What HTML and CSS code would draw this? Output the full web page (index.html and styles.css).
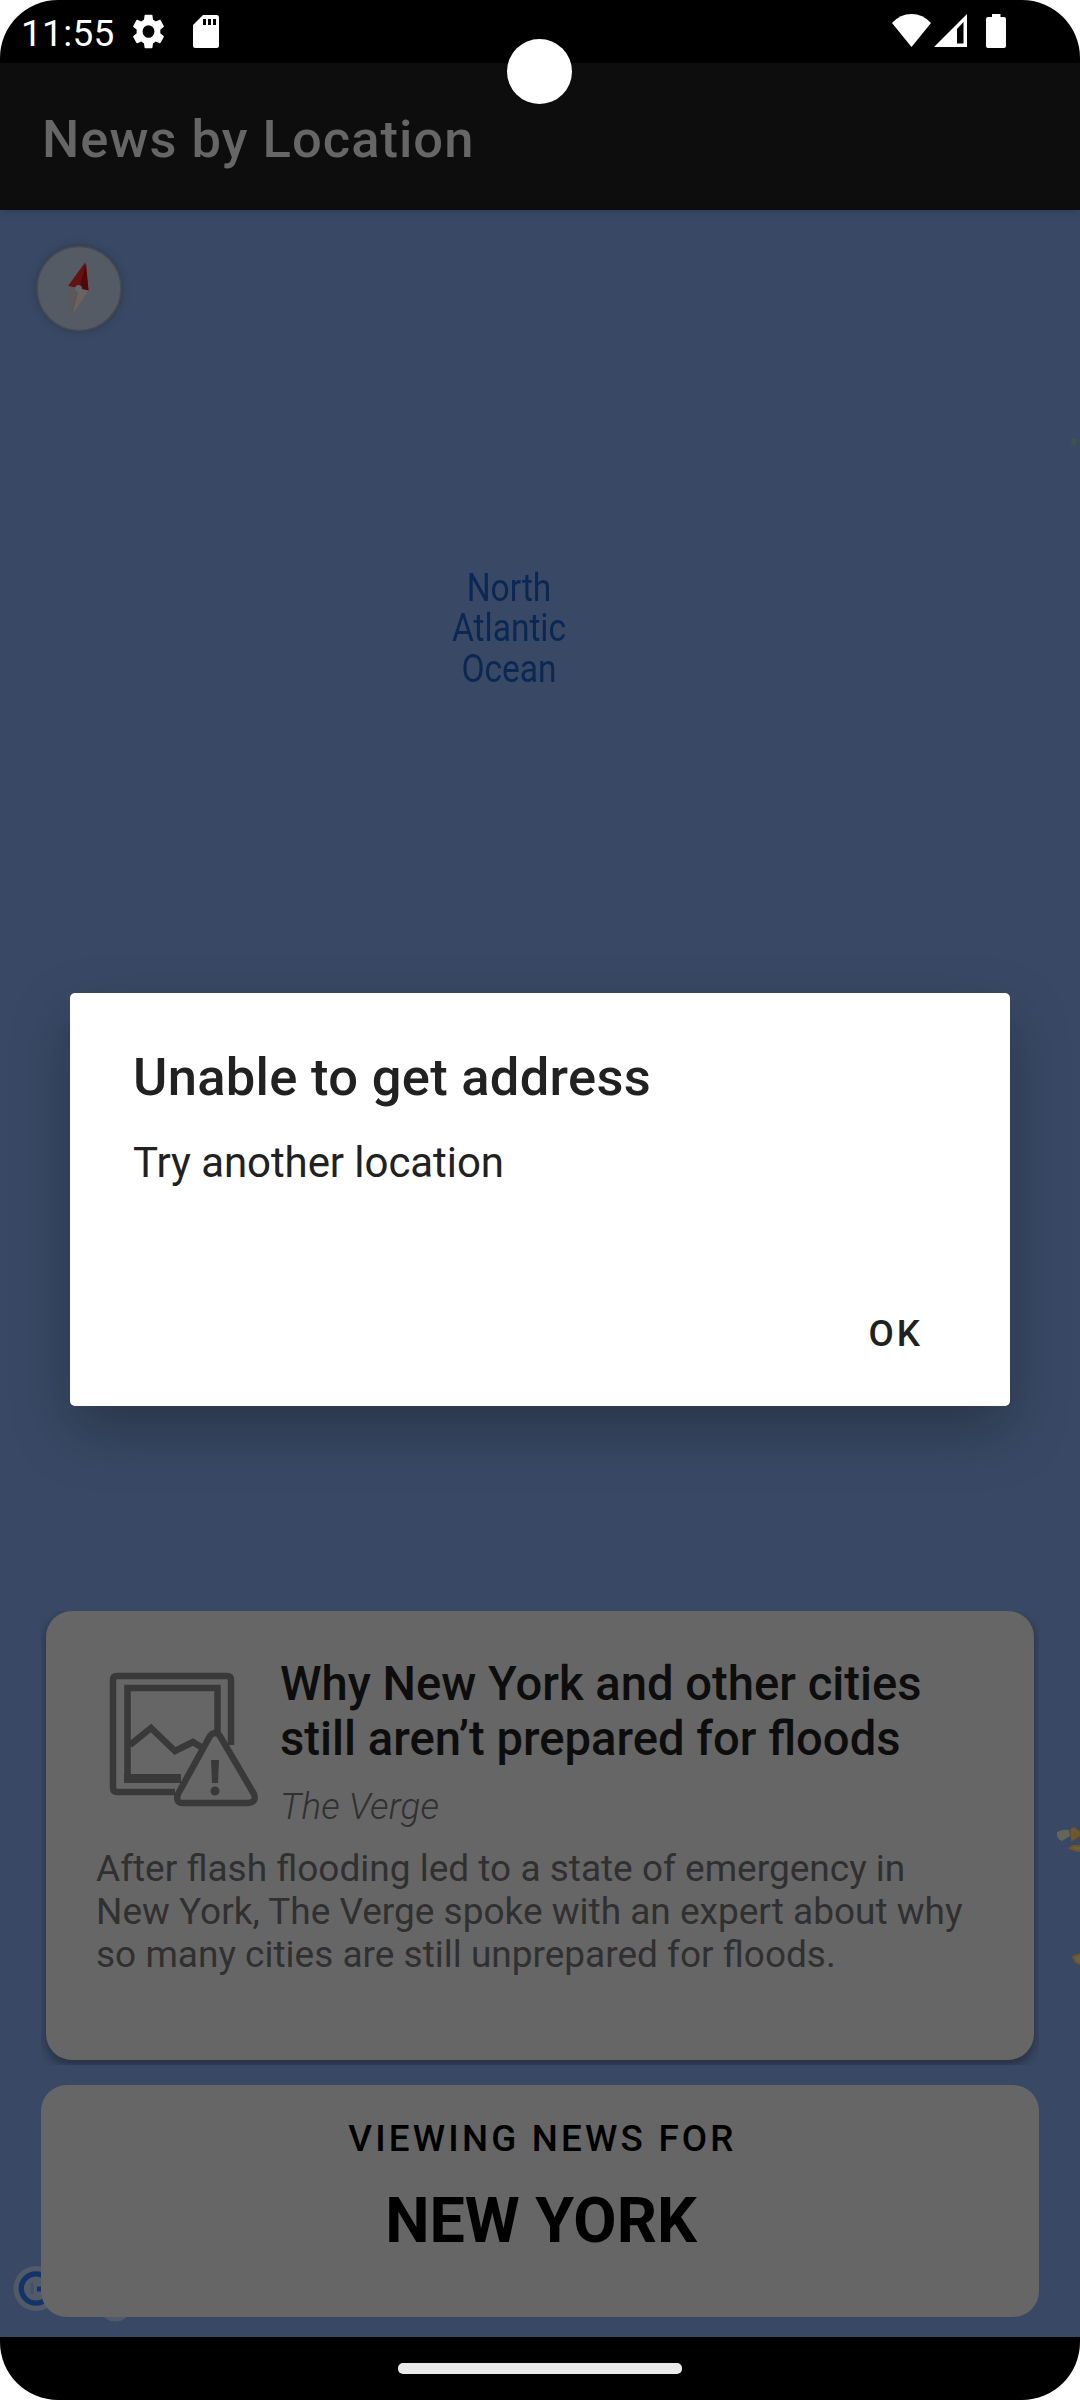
FILE: index.html
```html
<!DOCTYPE html>
<html lang="en">
<head>
<meta charset="utf-8">
<title>News by Location</title>
<link rel="stylesheet" href="styles.css">
</head>
<body>
<div class="screen">
  <header class="status">
    <span class="time">11:55</span>
    <svg class="gear" viewBox="2 2 20 20" preserveAspectRatio="none"><path d="M19.14 12.94c.04-.3.06-.61.06-.94 0-.32-.02-.64-.07-.94l2.03-1.58c.18-.14.23-.41.12-.61l-1.92-3.32c-.12-.22-.37-.29-.59-.22l-2.39.96c-.5-.38-1.03-.7-1.62-.94L14.4 2.81c-.04-.24-.24-.41-.48-.41h-3.84c-.24 0-.43.17-.47.41L9.25 5.35c-.59.24-1.13.57-1.62.94l-2.39-.96c-.22-.08-.47 0-.59.22L2.74 8.87c-.12.21-.08.47.12.61l2.03 1.58c-.05.3-.09.63-.09.94s.02.64.07.94l-2.03 1.58c-.18.14-.23.41-.12.61l1.92 3.32c.12.22.37.29.59.22l2.39-.96c.5.38 1.03.7 1.62.94l.36 2.54c.05.24.24.41.48.41h3.84c.24 0 .44-.17.47-.41l.36-2.54c.59-.24 1.13-.56 1.62-.94l2.39.96c.22.08.47 0 .59-.22l1.92-3.32c.12-.22.07-.47-.12-.61zM12 15.6A3.6 3.6 0 1 1 12 8.4a3.6 3.6 0 0 1 0 7.2z"/></svg>
    <svg class="sd" viewBox="0 0 26 33"><path d="M10 0H23.500A2.500 2.500 0 0 1 26 2.500V30.500A2.500 2.500 0 0 1 23.500 33H2.500A2.500 2.500 0 0 1 0 30.500V10Z"/><path class="cut" d="M10 4h3v6h-3zM15 4h3v6h-3zM20 4h3v6h-3z"/></svg>
    <span class="grow"></span>
    <svg class="wifi" viewBox="0 0 39 33"><path d="M0 9Q8 0 19.500 0T39 9L19.500 33Z"/></svg>
    <svg class="signal" viewBox="0 0 33 33"><path fill-rule="evenodd" d="M33 0V33H0ZM23 15V29.500H29.500V8Z"/></svg>
    <svg class="battery" viewBox="0 0 20 34"><path d="M6 0H14.500V3H18A2 2 0 0 1 20 5V32A2 2 0 0 1 18 34H2A2 2 0 0 1 0 32V5A2 2 0 0 1 2 3H6Z"/></svg>
  </header>
  <div class="appbar"><h1>News by Location</h1></div>
  <main class="map">
    <svg class="compass" viewBox="0 0 96 96">
      <circle class="rim" cx="48" cy="48.500" r="42"/>
      <path fill="#661111" d="M54 22.500 37 46 57.500 50.500Z"/><path fill="#530808" d="M55 23 57.500 50.500 48 48.500Z"/>
      <path fill="#5a5957" d="M37 46 48 48.500 42 73.500 40.500 73Z"/><path fill="#6a645d" d="M48 48.500 57.500 50.500 42 73.500Z"/>
      <circle cx="47.500" cy="48.500" r="3.500" fill="#60656e"/>
    </svg>
    <p class="ocean">North<br>Atlantic<br>Ocean</p>
    <svg class="islands" viewBox="0 0 26 1600">
      <path class="sand" d="M3 1413q6-3 12-2l1 6-8 5q-6-2-5-9z"/>
      <path class="coast" d="M17 1411l3-2 6 5v2l-8 5zM20 1413v4l4-1zM26 1427h-7l-3 2 7 3h3M26 1535l-7 3 3 5 4 2"/>
      <path class="grass" d="M18 19l5 1-2 7-4-1z"/>
    </svg>
    <svg class="maplogo" viewBox="0 0 130 60">
      <circle cx="24" cy="26.500" r="22.500" fill="#515a67"/><circle cx="103.500" cy="42" r="17.500" fill="#515a67"/>
      <circle cx="24" cy="26.500" r="14.700" fill="none" stroke="#15336a" stroke-width="5.300"/>
      <path d="M20 21v11" stroke="#405070" stroke-width="3"/><path d="M25 24.500h8v5h-8z" fill="#15336a"/>
    </svg>
    <div class="feed">
      <article class="news">
        <div class="top">
          <svg class="thumb" viewBox="0 0 152 138">
            <path d="M134 79V14q0-4-4-4H20q-4 0-4 4V122q0 4 4 4H78"/>
            <path d="M120.500 68V22H30.500V110M33 79 54 62 78 85 96 76 104 81"/>
            <path class="base" d="M27 112.500H84"/>
            <path class="sign" d="M113 70Q118 64 123 70L157 128Q160 137 150 137H86Q78 137 81 128Z"/>
            <path class="solid" d="M114 94h8l-1 23h-6zM122.500 125a4.500 4.500 0 1 0-9 0a4.500 4.500 0 1 0 9 0z"/>
          </svg>
          <div class="head"><h2>Why New York and other cities<br>still aren’t prepared for floods</h2><p class="source">The Verge</p></div>
        </div>
        <p class="summary">After flash flooding led to a state of emergency in<br>New York, The Verge spoke with an expert about why<br>so many cities are still unprepared for floods.</p>
      </article>
    </div>
    <section class="place"><p>VIEWING NEWS FOR</p><strong>NEW YORK</strong></section>
  </main>
  <footer class="nav"><span></span></footer>
  <div class="dialog" role="dialog"><h2>Unable to get address</h2><p>Try another location</p><button>OK</button></div>
  <div class="camera"></div>
</div>
</body>
</html>
```
FILE: styles.css
```css
* { box-sizing: border-box; margin: 0; padding: 0; }
body { background: #fff; font-family: Roboto, sans-serif; }
svg { display: block; flex: none; }
.screen { position: relative; width: 1080px; height: 2400px; display: flex; flex-direction: column; background: #000; border-radius: 58px; overflow: hidden; }
.status { height: 63px; padding: 0 74px 0 21px; display: flex; align-items: flex-start; }
.status svg { fill: #fff; }
.time { width: 111px; color: #fff; font-size: 37px; line-height: 43px; padding-top: 12px; letter-spacing: .3px; }
.gear { width: 33px; height: 35px; margin-top: 14px; }
.sd { width: 26px; height: 33px; margin: 15px 0 0 28px; }
.status .cut { fill: #000; }
.grow { flex: 1; }
.wifi { width: 39px; height: 33px; margin: 14px 3px 0 0; }
.signal { width: 33px; height: 33px; margin: 14px 19px 0 0; }
.battery { width: 20px; height: 34px; margin-top: 14px; }
.appbar { position: relative; z-index: 1; height: 147px; padding: 0 42px; display: flex; align-items: center; background: #0d0d0d; box-shadow: 0 2px 10px rgba(0,0,0,.15); }
h1 { color: #666; font-size: 52.5px; font-weight: 500; line-height: 62px; padding-top: 4px; letter-spacing: 1.02px; }
.map { position: relative; height: 2127px; padding: 1401px 41px 20px; display: flex; flex-direction: column; gap: 20px; background: #394965; }
.compass { position: absolute; left: 31px; top: 30px; width: 96px; height: 96px; filter: drop-shadow(0 0 4px rgba(0,0,0,.22)); }
.rim { fill: #555b65; stroke: #484a4e; stroke-width: 1.5; }
.ocean { position: absolute; left: 408.5px; top: 357.5px; width: 200px; color: #0b2753; font-size: 39px; line-height: 40.7px; text-align: center; transform: scaleX(.86); }
.islands { position: absolute; right: 0; top: 209px; width: 26px; height: 1600px; }
.sand { fill: #65645b; }
.grass { fill: #405349; }
.coast { fill: #65604f; stroke: #745521; stroke-width: 2; }
.maplogo { position: absolute; left: 12px; top: 2052px; width: 130px; height: 60px; }
.feed { position: relative; height: 454px; padding: 0 5px 5px; overflow: hidden; }
.news { height: 449px; border-radius: 26px; background: #666; padding: 43px 51px 0 50px; box-shadow: 0 5px 12px rgba(0,0,0,.38); }
.top { display: flex; }
.thumb { width: 152px; height: 138px; margin: 12px 0 0 1px; overflow: visible; fill: none; stroke: #393939; stroke-width: 6.5; }
.thumb .base { stroke-width: 9; }
.thumb .sign { fill: #666; }
.thumb .solid { fill: #393939; stroke: none; }
.head { margin-left: 31px; padding-top: 3px; flex: none; }
.news h2 { font-size: 47.2px; font-weight: 500; line-height: 55px; color: #0d0d0d; }
.source { margin-top: 18px; font-size: 36.75px; line-height: 43px; font-weight: 300; font-style: italic; letter-spacing: .15px; color: #303030; }
.summary { margin-top: 19px; font-size: 37px; line-height: 43px; color: #303030; white-space: nowrap; }
.place { position: relative; height: 232px; border-radius: 26px; background: #666; text-align: center; color: #000; }
.place p { padding: 32px 0 0 5px; font-size: 36.75px; line-height: 43px; font-weight: 500; letter-spacing: 3.2px; }
.place strong { display: block; margin-top: 24px; padding-left: 2px; font-size: 62.8px; line-height: 74px; }
.nav { height: 63px; display: flex; justify-content: center; padding-top: 26px; }
.nav span { width: 284px; height: 11px; border-radius: 5px; background: #ebebeb; }
.dialog { position: absolute; z-index: 2; left: 70px; top: 993px; width: 940px; height: 413px; padding: 53px 87px 0 63px; display: flex; flex-direction: column; background: #fff; color: #212121; border-radius: 5px; box-shadow: 0 24px 60px rgba(0,0,0,.28); }
.dialog h2 { font-size: 52.5px; font-weight: 500; line-height: 62px; letter-spacing: .3px; }
.dialog p { margin-top: 30px; font-size: 42px; line-height: 49px; letter-spacing: -.07px; }
.dialog button { align-self: flex-end; margin-top: 125px; border: 0; background: none; font: 500 36.75px/43px Roboto, sans-serif; letter-spacing: 3px; color: #212121; }
.camera { position: absolute; z-index: 3; left: 507px; top: 39px; width: 65px; height: 65px; border-radius: 50%; background: #fff; }
```
